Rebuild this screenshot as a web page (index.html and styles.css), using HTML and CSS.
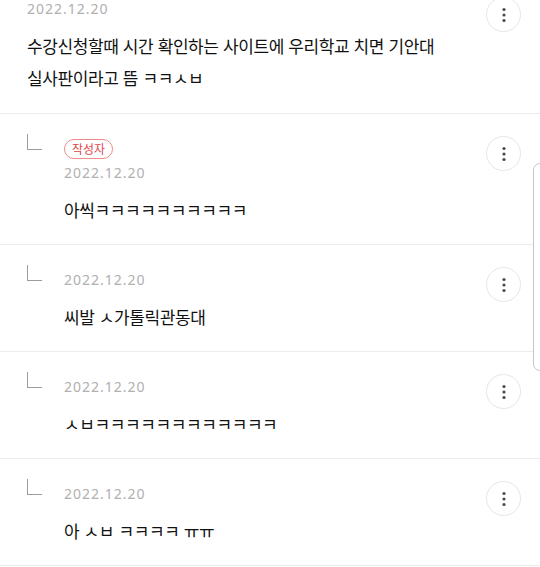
FILE: index.html
```html
<!DOCTYPE html>
<html lang="ko">
<head>
<meta charset="utf-8">
<title>댓글</title>
<link rel="stylesheet" href="styles.css">
</head>
<body>
<div class="list">
  <div class="comment first">
    <div class="body">
      <div class="date">2022.12.20</div>
      <p class="text">수강신청할때 시간 확인하는 사이트에 우리학교 치면 기안대<br>실사판이라고 뜸 ㅋㅋㅅㅂ</p>
    </div>
    <button class="more" aria-label="더보기"><svg width="6" height="16" viewBox="0 0 6 16"><circle cx="3" cy="2.5" r="1.6"/><circle cx="3" cy="8" r="1.6"/><circle cx="3" cy="13.5" r="1.6"/></svg></button>
  </div>
  <div class="comment reply">
    <span class="corner"></span>
    <div class="body">
      <span class="badge">작성자</span>
      <div class="date">2022.12.20</div>
      <p class="text">아씩ㅋㅋㅋㅋㅋㅋㅋㅋㅋㅋ</p>
    </div>
    <button class="more" aria-label="더보기"><svg width="6" height="16" viewBox="0 0 6 16"><circle cx="3" cy="2.5" r="1.6"/><circle cx="3" cy="8" r="1.6"/><circle cx="3" cy="13.5" r="1.6"/></svg></button>
  </div>
  <div class="comment reply">
    <span class="corner"></span>
    <div class="body">
      <div class="date">2022.12.20</div>
      <p class="text">씨발 ㅅ가톨릭관동대</p>
    </div>
    <button class="more" aria-label="더보기"><svg width="6" height="16" viewBox="0 0 6 16"><circle cx="3" cy="2.5" r="1.6"/><circle cx="3" cy="8" r="1.6"/><circle cx="3" cy="13.5" r="1.6"/></svg></button>
  </div>
  <div class="comment reply">
    <span class="corner"></span>
    <div class="body">
      <div class="date">2022.12.20</div>
      <p class="text">ㅅㅂㅋㅋㅋㅋㅋㅋㅋㅋㅋㅋㅋㅋ</p>
    </div>
    <button class="more" aria-label="더보기"><svg width="6" height="16" viewBox="0 0 6 16"><circle cx="3" cy="2.5" r="1.6"/><circle cx="3" cy="8" r="1.6"/><circle cx="3" cy="13.5" r="1.6"/></svg></button>
  </div>
  <div class="comment reply">
    <span class="corner"></span>
    <div class="body">
      <div class="date">2022.12.20</div>
      <p class="text">아 ㅅㅂ ㅋㅋㅋㅋ ㅠㅠ</p>
    </div>
    <button class="more" aria-label="더보기"><svg width="6" height="16" viewBox="0 0 6 16"><circle cx="3" cy="2.5" r="1.6"/><circle cx="3" cy="8" r="1.6"/><circle cx="3" cy="13.5" r="1.6"/></svg></button>
  </div>
</div>
<div class="side-panel"></div>
</body>
</html>
```
FILE: styles.css
```css
html, body {
  margin: 0;
  padding: 0;
  background: #fff;
}
body {
  font-family: "Noto Sans CJK KR", "Noto Sans", sans-serif;
  color: #111;
  position: relative;
  width: 540px;
  height: 567px;
  overflow: hidden;
}
.list {
  display: flex;
  flex-direction: column;
}
.comment {
  display: flex;
  align-items: flex-start;
  padding: 20px 19px 21px 27px;
  border-bottom: 1px solid #ececec;
}
.comment.first {
  padding-top: 0;
  padding-bottom: 19px;
}
.body {
  flex: 1;
  min-width: 0;
  display: flex;
  flex-direction: column;
  align-items: flex-start;
}
.reply .body {
  padding-top: 4px;
}
.reply .badge + .date {
  margin-top: 3px;
}
.reply .body:has(.badge) {
  padding-top: 5px;
}
.corner {
  flex: none;
  width: 14px;
  height: 15px;
  margin-top: 0;
  margin-right: 22px;
  border-left: 1.5px solid #9c9c9c;
  border-bottom: 1.5px solid #9c9c9c;
}
.date {
  font-family: "Noto Sans", sans-serif;
  font-size: 14px;
  line-height: 22px;
  letter-spacing: 1px;
  color: #b0b0b0;
}
.first .date {
  line-height: 18px;
}
.badge {
  box-sizing: border-box;
  height: 20px;
  padding: 0 7px;
  border: 1px solid #ef8b8b;
  border-radius: 10px;
  font-size: 12px;
  line-height: 18px;
  color: #e0474c;
}
.text {
  margin: 13px 0 0;
  font-size: 17px;
  line-height: 26px;
  letter-spacing: -0.4px;
  color: #111;
  white-space: nowrap;
}
.first .text {
  margin-top: 12px;
  line-height: 32px;
}
.more {
  flex: none;
  box-sizing: border-box;
  width: 35px;
  height: 35px;
  margin-top: 2px;
  padding: 0;
  border: 1px solid #e6e6e6;
  border-radius: 50%;
  background: #fff;
  display: flex;
  align-items: center;
  justify-content: center;
}
.first .more {
  margin-top: -3px;
}
.more svg {
  fill: #4a4a4a;
}
.side-panel {
  position: absolute;
  left: 533px;
  top: 163px;
  width: 20px;
  height: 208px;
  box-sizing: border-box;
  border: 1px solid #c6c6c6;
  border-radius: 7px;
  background: #fff;
}
```
